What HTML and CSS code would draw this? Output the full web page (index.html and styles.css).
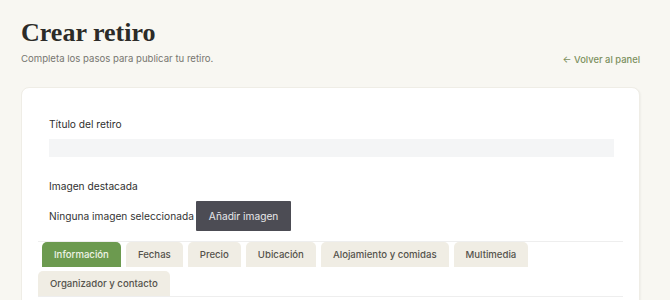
FILE: index.html
```html
<!DOCTYPE html>
<html lang="es">
<head>
<meta charset="utf-8">
<title>Crear retiro</title>
<link rel="stylesheet" href="styles.css">
</head>
<body>
<div class="page">
  <header class="head">
    <h1 class="title">Crear retiro</h1>
    <div class="subrow">
      <p class="subtitle">Completa los pasos para publicar tu retiro.</p>
      <a class="back" href="#">← Volver al panel</a>
    </div>
  </header>
  <section class="card">
    <div class="field">
      <label class="label">Título del retiro</label>
      <div class="input"></div>
    </div>
    <div class="field">
      <label class="label">Imagen destacada</label>
      <div class="imgrow">
        <span class="none">Ninguna imagen seleccionada</span>
        <button class="btn">Añadir imagen</button>
      </div>
    </div>
    <ul class="tabs">
      <li class="tab active">Información</li>
      <li class="tab">Fechas</li>
      <li class="tab">Precio</li>
      <li class="tab">Ubicación</li>
      <li class="tab">Alojamiento y comidas</li>
      <li class="tab">Multimedia</li>
      <li class="tab">Organizador y contacto</li>
    </ul>
  </section>
</div>
</body>
</html>
```
FILE: styles.css
```css
html, body {
  margin: 0;
  padding: 0;
  background: #f8f7f2;
  font-family: "Inter", "DejaVu Sans", sans-serif;
  color: #333;
}
.page {
  padding: 0 30px 0 21px;
}
.head {
  padding-top: 18px;
}
.title {
  margin: 0;
  font-family: "Liberation Serif", serif;
  font-weight: bold;
  font-size: 26px;
  line-height: 30px;
  color: #2c2b28;
}
.subrow {
  display: flex;
  justify-content: space-between;
  align-items: center;
  margin-top: 3px;
}
.subtitle {
  margin: 0;
  font-size: 9.6px;
  color: #777670;
  line-height: 14px;
}
.back {
  font-size: 9.4px;
  font-weight: 500;
  color: #7b8f5c;
  text-decoration: none;
  line-height: 14px;
  margin-top: 2px;
}
.card {
  margin-top: 20px;
  background: #fff;
  border: 1px solid #efede6;
  border-radius: 8px;
  box-shadow: 1px 1px 2px rgba(0,0,0,0.04);
  padding: 29px 16px 4px 16px;
  height: 240px;
  box-sizing: border-box;
}
.field {
  padding: 0 9px 0 11px;
}
.label {
  display: block;
  font-size: 10.2px;
  line-height: 14px;
  color: #2f2f2f;
}
.input {
  margin-top: 8px;
  height: 18px;
  background: #f4f5f6;
  margin-bottom: 22px;
}
.imgrow {
  display: flex;
  align-items: center;
  margin-top: 8px;
  margin-bottom: 10px;
}
.none {
  font-size: 10.2px;
  color: #333;
}
.btn {
  margin-left: 2px;
  height: 30px;
  padding: 0 13px;
  border: 0;
  border-radius: 1px;
  background: #4c4c54;
  color: #e8e8ea;
  font-family: "Inter", "DejaVu Sans", sans-serif;
  font-size: 10.2px;
}
.tabs {
  list-style: none;
  margin: 0;
  padding: 0;
  border-top: 1px solid #eeeeee;
  border-bottom: 1px solid #eeeeee;
  display: flex;
  flex-wrap: wrap;
  gap: 4px 5px;
}
.tab {
  height: 25px;
  line-height: 25px;
  padding: 0 12px;
  background: #f0ede4;
  color: #55534c;
  font-size: 9.6px;
  font-weight: 500;
  border-radius: 5px 5px 0 0;
}
.tab:first-child {
  margin-left: 4px;
}
.tab.active {
  background: #6c9a4f;
  color: #eef3e6;
}
```
